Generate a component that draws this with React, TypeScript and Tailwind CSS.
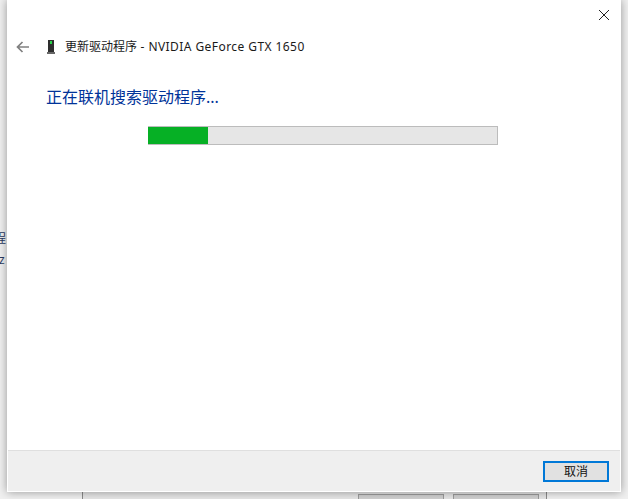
import React from "react";

const font = { fontFamily: '"Noto Sans","Noto Sans CJK SC","Liberation Sans",sans-serif' };

export default function App() {
  return (
    <div className="relative w-[628px] h-[499px] overflow-hidden bg-[#f0f0f0]" style={font}>
      {/* background window peeking out under the dialog */}
      <div className="absolute left-[82px] top-[480px] w-[465px] h-[19px] bg-[#e6e6e6] border-x border-[#8a8a8a]" />
      <div className="absolute left-[358px] top-[494px] w-[86px] h-[8px] bg-[#d0d0d0] border border-[#9c9c9c]" />
      <div className="absolute left-[453px] top-[494px] w-[86px] h-[8px] bg-[#d0d0d0] border border-[#9c9c9c]" />
      <div className="absolute left-0 top-[232px] w-[7px] h-[36px] text-[12px] leading-[14px] text-[#2a3a60] overflow-hidden">
        <div className="ml-[-6px]">程</div>
        <div className="ml-[-1px] mt-[7px]">z</div>
      </div>
      <div className="absolute left-[7px] top-0 w-[614px] h-[492px] bg-white flex flex-col shadow-[0_0_9px_rgba(0,0,0,0.38)] border-x border-b border-white">
        <div className="flex justify-end h-[32px] pt-[9px] pr-[10px]">
          <svg width="12" height="12" viewBox="0 0 12 12" fill="none" stroke="#222" strokeWidth="1">
            <path d="M1 1l10 10M11 1L1 11" />
          </svg>
        </div>
        <div className="flex items-center h-[29px] pl-[8px]">
          <svg width="13" height="12" viewBox="0 0 13 12" fill="none" stroke="#808080" strokeWidth="1.7">
            <path d="M13 6H1.5M6.5 1L1.5 6l5 5" />
          </svg>
          <svg className="ml-[18px]" width="8" height="14" viewBox="0 0 8 14">
            <rect x="1" y="0" width="6" height="12" fill="#2e2e2e" />
            <rect x="3" y="1" width="2" height="3" fill="#29d34a" />
            <rect x="0" y="12" width="8" height="2" fill="#666" />
          </svg>
          <span className="ml-[10px] text-[12px] text-[#1a1a1a]">
            更新驱动程序<span className="tracking-[0.43px]"> - NVIDIA GeForce GTX 1650</span>
          </span>
        </div>
        <div className="pl-[38px] mt-[25px] text-[16px] leading-[22px] text-[#003399]">正在联机搜索驱动程序...</div>
        <div className="ml-[140px] mt-[18px] w-[350px] h-[19px] bg-[#e6e6e6] border border-[#bcbcbc] border-l-0">
          <div className="w-[60px] h-full bg-[#06b025]" />
        </div>
        <div className="flex-1" />
        <div className="h-[41px] bg-[#efefef] border-t border-[#dfdfdf] flex justify-end items-start pt-[10px] pr-[11px]">
          <button className="w-[66px] h-[21px] bg-[#e1e1e1] border-2 border-[#0078d7] text-[12px] leading-[17px] text-[#111]">取消</button>
        </div>
      </div>
    </div>
  );
}
